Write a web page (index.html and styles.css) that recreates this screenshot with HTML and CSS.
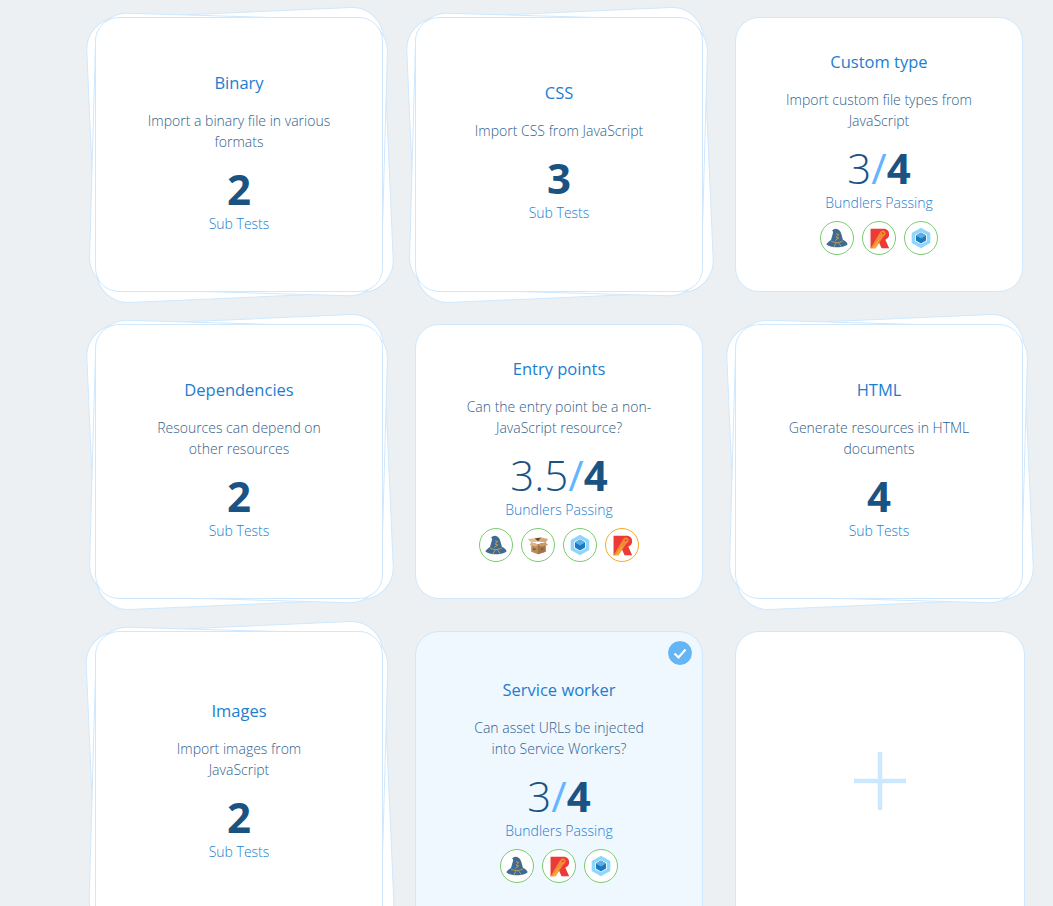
FILE: index.html
```html
<!DOCTYPE html>
<html lang="en">
  <head>
    <meta charset="UTF-8" />
    <meta name="viewport" content="width=device-width, initial-scale=1.0" />
    <title>Bundler tests</title>
    <link rel="stylesheet" href="styles.css">
  </head>
  <body>
    <svg class="icon-defs" width="0" height="0">
      <symbol id="hat" viewBox="0 0 26 26">
        <path d="M11 2 C14 2 17 4 18 8 L20 15 C22 16 25 18 25.500 20 C25 22 19 24 13 24 C7 24 1 22 .5 20 C2 18 5 16 6 15 L8 8 C8.500 6.500 9 5 7 4.500 C8.500 3 10 2 11 2 Z" fill="#3f6a94"/>
        <path d="M6 16.500 C10 19 15 19 20 16.500" fill="none" stroke="#e0a83a" stroke-width="1"/>
        <path d="M12 8 L15 9 L12 12 L15 13 L11 16 M12 19 L9 24 M15 19 L18 23" fill="none" stroke="#e0a83a" stroke-width="1"/>
      </symbol>
      <symbol id="box" viewBox="0 0 26 26">
        <path d="M5 10 L13 12 L22 10 L22 21 L13 24 L5 21 Z" fill="#b98a5a"/>
        <path d="M13 12 L22 10 L22 21 L13 24 Z" fill="#a3744a"/>
        <path d="M5 10 L1 6 L9 5 L13 9 Z" fill="#e2bd8c"/>
        <path d="M13 9 L17 4 L25 6 L22 10 Z" fill="#d3a878"/>
        <path d="M9 5 L17 4 L13 9 Z" fill="#6d4a2c"/>
        <path d="M5 10 L13 12 L11 15 L3 13 Z" fill="#d9b285"/>
        <path d="M13 12 L22 10 L25 13 L16 15 Z" fill="#c79c6b"/>
        <rect x="7" y="17" width="3" height="2" fill="#7a5433"/>
        <rect x="17" y="17" width="2" height="2" fill="#7a5433"/>
      </symbol>
      <symbol id="rollup" viewBox="0 0 26 26">
        <path d="M3 2 L18 2 C23 2 25 5 25 9 C25 12 23 14 20.500 15 L25 25 L16 25 L12 16 L5 25 L3 25 Z" fill="#ec3a37"/>
        <path d="M3 25 L14.500 6 C16 3.500 19.500 3.500 20.500 6 C21.500 8.500 20 10.500 18 11.500 L9 25 Z" fill="#f48a38"/>
        <path d="M14 13 L9 25 L5 25 Z" fill="#f4b030"/>
        <circle cx="17.500" cy="7.500" r="1.200" fill="#ec3a37"/>
      </symbol>
      <symbol id="webpack" viewBox="0 0 26 26">
        <path d="M13 1 L24 7 L24 19 L13 25 L2 19 L2 7 Z" fill="#8ed6fb"/>
        <path d="M13 5.500 L20 9.500 L20 16.500 L13 20.500 L6 16.500 L6 9.500 Z" fill="#fff"/>
        <path d="M13 6.500 L19 10 L19 16 L13 19.500 L7 16 L7 10 Z" fill="#1c78c0"/>
        <path d="M13 6.500 L19 10 L13 13.500 L7 10 Z" fill="#5aaee3"/>
      </symbol>
    </svg>

    <div class="card-grid">
      <div class="card stacked">
        <div class="card-title">Binary</div>
        <div class="card-desc">Import a binary file in various formats</div>
        <div class="score"><b>2</b></div>
        <div class="score-label">Sub Tests</div>
      </div>

      <div class="card stacked">
        <div class="card-title">CSS</div>
        <div class="card-desc">Import CSS from JavaScript</div>
        <div class="score"><b>3</b></div>
        <div class="score-label">Sub Tests</div>
      </div>

      <div class="card">
        <div class="card-title">Custom type</div>
        <div class="card-desc">Import custom file types from JavaScript</div>
        <div class="score">3<i>/</i><b>4</b></div>
        <div class="score-label">Bundlers Passing</div>
        <div class="bundlers">
          <span class="bundler"><svg><use href="#hat"/></svg></span>
          <span class="bundler"><svg><use href="#rollup"/></svg></span>
          <span class="bundler"><svg><use href="#webpack"/></svg></span>
        </div>
      </div>

      <div class="card stacked">
        <div class="card-title">Dependencies</div>
        <div class="card-desc">Resources can depend on other resources</div>
        <div class="score"><b>2</b></div>
        <div class="score-label">Sub Tests</div>
      </div>

      <div class="card">
        <div class="card-title">Entry points</div>
        <div class="card-desc">Can the entry point be a non-JavaScript resource?</div>
        <div class="score">3.5<i>/</i><b>4</b></div>
        <div class="score-label">Bundlers Passing</div>
        <div class="bundlers">
          <span class="bundler"><svg><use href="#hat"/></svg></span>
          <span class="bundler"><svg><use href="#box"/></svg></span>
          <span class="bundler"><svg><use href="#webpack"/></svg></span>
          <span class="bundler partial"><svg><use href="#rollup"/></svg></span>
        </div>
      </div>

      <div class="card stacked">
        <div class="card-title">HTML</div>
        <div class="card-desc">Generate resources in HTML documents</div>
        <div class="score"><b>4</b></div>
        <div class="score-label">Sub Tests</div>
      </div>

      <div class="card stacked">
        <div class="card-title">Images</div>
        <div class="card-desc">Import images from JavaScript</div>
        <div class="score"><b>2</b></div>
        <div class="score-label">Sub Tests</div>
      </div>

      <div class="card selected">
        <span class="check">
          <svg viewBox="0 0 24 24"><path d="M6.500 12.500 L10.500 16.500 L17.500 8.500" /></svg>
        </span>
        <div class="card-title">Service worker</div>
        <div class="card-desc">Can asset URLs be injected into Service Workers?</div>
        <div class="score">3<i>/</i><b>4</b></div>
        <div class="score-label">Bundlers Passing</div>
        <div class="bundlers">
          <span class="bundler"><svg><use href="#hat"/></svg></span>
          <span class="bundler"><svg><use href="#rollup"/></svg></span>
          <span class="bundler"><svg><use href="#webpack"/></svg></span>
        </div>
      </div>

      <div class="card add-card">
        <svg class="plus" viewBox="0 0 52 58"><path d="M26 0 V58 M0 29 H52" /></svg>
      </div>
    </div>
  </body>
</html>
```

FILE: styles.css
```css
* {
  margin: 0;
  padding: 0;
  box-sizing: border-box;
}

body {
  overflow: hidden;
  height: 100vh;
  background-color: #ecf0f3;
  font-family: "Open Sans", sans-serif;
}

.icon-defs {
  display: block;
  height: 0;
}

.card-grid {
  display: grid;
  grid-template-columns: repeat(3, 288px);
  grid-template-rows: 275px 275px 303px;
  gap: 32px;
  padding: 17px 0 0 95px;
}

.card {
  position: relative;
  display: flex;
  flex-direction: column;
  align-items: center;
  justify-content: center;
  padding-bottom: 4px;
  background-color: #fff;
  border: 1px solid #cfe8fd;
  border-radius: 24px;
  text-align: center;
}

/* the two loose sheets behind a card that holds sub tests */
.stacked::before,
.stacked::after {
  content: '';
  position: absolute;
  background-color: #fff;
  border: 1px solid #cfe8fd;
  border-radius: 32px;
  z-index: -1;
}

.stacked::before {
  top: -6px;
  left: -5px;
  right: -7px;
  bottom: -7px;
  transform: rotate(-2.5deg);
}

.stacked::after {
  top: -2px;
  left: -4px;
  right: -3px;
  bottom: -2px;
  transform: rotate(1.6deg);
}

.card-title {
  font-size: 16.5px;
  line-height: 22px;
  color: #1b7ed0;
  margin-bottom: 16px;
}

.card-desc {
  max-width: 187px;
  font-size: 14px;
  font-weight: 300;
  line-height: 21px;
  color: #31608c;
}

.score {
  margin-top: 13px;
  font-size: 42px;
  font-weight: 300;
  line-height: 48px;
  color: #1a5282;
}

.score b {
  font-weight: 700;
}

.score i {
  font-style: normal;
  font-weight: 400;
  color: #64b5ff;
}

.score-label {
  margin-top: 1px;
  font-size: 14px;
  font-weight: 300;
  line-height: 20px;
  color: #1b7ed0;
}

.bundlers {
  display: flex;
  gap: 8px;
  margin-top: 8px;
}

.bundler {
  display: flex;
  align-items: center;
  justify-content: center;
  width: 34px;
  height: 34px;
  background-color: #fff;
  border: 1px solid #7ccb72;
  border-radius: 50%;
}

.bundler.partial {
  border-color: #f9a825;
}

.bundler svg {
  width: 22px;
  height: 22px;
}

.selected {
  background-color: #eff7ff;
}

.check {
  position: absolute;
  top: 8px;
  right: 9px;
  width: 26px;
  height: 26px;
  background-color: #64b5f6;
  border: 1px solid #fff;
  border-radius: 50%;
}

.check svg {
  display: block;
  fill: none;
  stroke: #fff;
  stroke-width: 2.2;
}

.add-card {
  margin-right: -2px;
  padding-bottom: 3px;
}

.plus {
  width: 52px;
  height: 58px;
  fill: none;
  stroke: #cce8ff;
  stroke-width: 4.5;
}
```
